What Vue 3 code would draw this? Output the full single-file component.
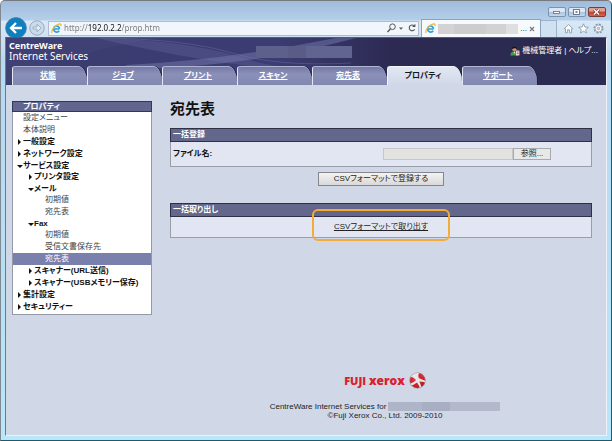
<script setup>
import { ref } from 'vue'

const url = ref('http://192.0.2.2/prop.htm')
const fileName = ref('')

const tabs = [
  { label: '状態' },
  { label: 'ジョブ' },
  { label: 'プリント' },
  { label: 'スキャン' },
  { label: '宛先表' },
  { label: 'プロパティ', active: true },
  { label: 'サポート' },
]

const menu = [
  { label: '設定メニュー' },
  { label: '本体説明' },
  { label: '一般設定', state: 'closed' },
  { label: 'ネットワーク設定', state: 'closed' },
  {
    label: 'サービス設定',
    state: 'open',
    children: [
      { label: 'プリンタ設定', state: 'closed' },
      { label: 'メール', state: 'open', children: [{ label: '初期値' }, { label: '宛先表' }] },
      {
        label: 'Fax',
        state: 'open',
        children: [{ label: '初期値' }, { label: '受信文書保存先' }, { label: '宛先表', current: true }],
      },
      { label: 'スキャナー(URL送信)', state: 'closed' },
      { label: 'スキャナー(USBメモリー保存)', state: 'closed' },
    ],
  },
  { label: '集計設定', state: 'closed' },
  { label: 'セキュリティー', state: 'closed' },
]
</script>

<template>
  <div class="window">
    <div class="titlebar">
      <button class="win-btn" type="button" aria-label="最小化">
        <svg viewBox="0 0 17 8" width="17" height="8"><rect x="5.5" y="3.5" width="6" height="2" fill="#fff" stroke="#5d6f86" stroke-width=".8" /></svg>
      </button>
      <button class="win-btn" type="button" aria-label="最大化">
        <svg viewBox="0 0 17 8" width="17" height="8"><rect x="5.5" y="1.5" width="6" height="5" fill="#fff" stroke="#5d6f86" stroke-width=".9" /><rect x="7.5" y="3.2" width="2" height="1.6" fill="#5d6f86" /></svg>
      </button>
      <button class="win-btn close" type="button" aria-label="閉じる">
        <svg viewBox="0 0 17 8" width="17" height="8"><path d="M6 1.5l5 5M11 1.5l-5 5" stroke="#6b2a22" stroke-width="2.8" /><path d="M6 1.5l5 5M11 1.5l-5 5" stroke="#fff" stroke-width="1.6" /></svg>
      </button>
    </div>

    <div class="toolbar">
      <button class="nav" type="button" aria-label="戻る">
        <svg viewBox="0 0 22 22" width="22" height="22"><circle cx="11" cy="11" r="10.4" fill="#0f7fbf" stroke="#3c7ba6" stroke-width=".8" /><path d="M17 11H6.5M11 6l-5 5 5 5" fill="none" stroke="#fff" stroke-width="2.3" /></svg>
      </button>
      <button class="nav" type="button" aria-label="進む">
        <svg viewBox="0 0 18 18" width="18" height="18"><circle cx="9" cy="9" r="7.2" fill="#c9dcee" stroke="#9aa9b9" stroke-width="1" /><path d="M5 8h4V5.2L13 9l-4 3.8V10H5z" fill="#e6f0f9" stroke="#93a2b3" stroke-width=".8" /></svg>
      </button>
      <div class="address">
        <svg class="ie" viewBox="0 0 12 12" width="11" height="11"><path d="M9.3 6.5H3.6M9.4 6.2A3.3 3.3 0 1 0 8.9 8.4" fill="none" stroke="#2b9fd9" stroke-width="1.8" /><path d="M1.2 10.8C-.4 9 4 2.6 8.4 1.2c2.3-.8 3 .2 2.3 2" fill="none" stroke="#f0b52e" stroke-width="1.3" /></svg>
        <input v-model="url" class="url" type="text" aria-label="アドレス" />
        <button class="plain" type="button" aria-label="検索">
          <svg viewBox="0 0 18 12" width="18" height="12"><circle cx="6.5" cy="4.7" r="2.8" fill="none" stroke="#555" stroke-width="1" /><path d="M4.5 6.8L1.5 10" stroke="#555" stroke-width="1.4" /><path d="M13 5.5h4l-2 2.3z" fill="#555" /></svg>
        </button>
        <button class="plain" type="button" aria-label="更新">
          <svg viewBox="0 0 10 12" width="10" height="12"><path d="M7.7 7.2A2.9 2.9 0 1 1 7 3.6" fill="none" stroke="#555" stroke-width="1.1" /><path d="M8.4 1.8v3.3H5.1z" fill="#555" /></svg>
        </button>
      </div>
      <div class="browser-tab">
        <svg class="ie" viewBox="0 0 12 12" width="11" height="11"><path d="M9.3 6.5H3.6M9.4 6.2A3.3 3.3 0 1 0 8.9 8.4" fill="none" stroke="#2b9fd9" stroke-width="1.8" /><path d="M1.2 10.8C-.4 9 4 2.6 8.4 1.2c2.3-.8 3 .2 2.3 2" fill="none" stroke="#f0b52e" stroke-width="1.3" /></svg>
        <span class="masked tab-mask"></span>
        <span class="dots">...</span>
        <button class="plain" type="button" aria-label="タブを閉じる">
          <svg viewBox="0 0 6 6" width="6" height="6"><path d="M1 1l4 4M5 1L1 5" stroke="#777" stroke-width="1.1" /></svg>
        </button>
      </div>
      <button class="new-tab" type="button" aria-label="新しいタブ"></button>
      <div class="tools">
        <button class="plain" type="button" aria-label="ホーム">
          <svg viewBox="0 0 12 12" width="11" height="11"><path d="M1.3 6.3L6 1.6l4.7 4.7H9.3v4.4H7.2V7.4H4.8v3.3H2.7V6.3z" fill="#fff" stroke="#8796a8" stroke-width=".9" /></svg>
        </button>
        <button class="plain" type="button" aria-label="お気に入り">
          <svg viewBox="0 0 12 12" width="11" height="11"><path d="M6 .9l1.5 3.5 3.8.3-2.9 2.5.9 3.7L6 8.9l-3.3 2 .9-3.7L.7 4.7l3.8-.3z" fill="#fff" stroke="#8796a8" stroke-width=".9" /></svg>
        </button>
        <button class="plain" type="button" aria-label="ツール">
          <svg viewBox="0 0 12 12" width="11" height="11"><circle cx="6" cy="6" r="4.5" fill="none" stroke="#8796a8" stroke-width="2" stroke-dasharray="2 1.53" /><circle cx="6" cy="6" r="3.7" fill="#fff" stroke="#8796a8" stroke-width=".8" /><circle cx="6" cy="6" r="1.4" fill="#c9dcee" stroke="#8796a8" stroke-width=".8" /></svg>
        </button>
      </div>
    </div>

    <div class="page">
      <header class="banner">
        <svg class="swoosh" viewBox="0 0 600 47" preserveAspectRatio="none">
          <path d="M0 0H150Q40 20 0 47z" fill="#5a5e94" opacity=".15" />
          <path d="M90 0Q190 2 250 24L300 34Q200 26 90 0z" fill="#6a6fa6" opacity=".3" />
          <path d="M120 27Q220 22 330 0H350Q240 30 120 31z" fill="#7a80b4" opacity=".45" />
          <path d="M95 0Q180 1 226 15T345 25" fill="none" stroke="#7177a8" stroke-width="1" opacity=".4" />
        </svg>
        <div class="banner-top">
          <div class="product">
            <strong>CentreWare</strong>
            <span>Internet Services</span>
          </div>
          <span class="host-mask"></span>
          <div class="user">
            <svg viewBox="0 0 10 10" width="10" height="10"><circle cx="4.4" cy="3" r="2.3" fill="#d09468" /><path d="M2 3Q1.6.5 4.4.4T7 3Q5 1.6 2 3z" fill="#17130f" /><path d="M.4 9.6Q.5 5.8 4 5.6T8 9.6z" fill="#3fa04b" /><path d="M3.7 5.7l.8 2 .8-2z" fill="#fff" /><rect x="6" y="4.6" width="3.4" height="4.8" fill="#f3eee8" /><path d="M6.7 6h2M6.7 7.7h2" stroke="#c24238" stroke-width=".9" /></svg>
            <a href="#">機械管理者</a><span>|</span><a href="#">ヘルプ...</a>
          </div>
        </div>
        <nav class="tabs" aria-label="メイン">
          <a v-for="tab in tabs" :key="tab.label" href="#" :class="['tab', { active: tab.active }]">{{ tab.label }}</a>
        </nav>
      </header>

      <div class="body">
        <aside class="side">
          <h2>プロパティ</h2>
          <ul class="tree">
            <li v-for="a in menu" :key="a.label">
              <a href="#" :class="['row', a.state]"><i></i>{{ a.label }}</a>
              <ul v-if="a.children" class="level2">
                <li v-for="b in a.children" :key="b.label">
                  <a href="#" :class="['row', b.state]"><i></i>{{ b.label }}</a>
                  <ul v-if="b.children" class="level3">
                    <li v-for="c in b.children" :key="c.label">
                      <a href="#" :class="['row', { current: c.current }]">{{ c.label }}</a>
                    </li>
                  </ul>
                </li>
              </ul>
            </li>
          </ul>
        </aside>

        <main class="main">
          <h1>宛先表</h1>
          <form @submit.prevent>
            <section class="panel">
              <h3>一括登録</h3>
              <div class="panel-body file-row">
                <label for="csv">ファイル名:</label>
                <div class="file">
                  <input id="csv" v-model="fileName" type="text" readonly />
                  <button type="button">参照...</button>
                </div>
              </div>
            </section>
            <button class="submit" type="submit">CSVフォーマットで登録する</button>
          </form>
          <section class="panel">
            <h3>一括取り出し</h3>
            <div class="panel-body export">
              <a class="export-link" href="#">CSVフォーマットで取り出す</a>
            </div>
          </section>

          <footer>
            <div class="logo">
              <span>FUJI <b>xerox</b></span>
              <svg viewBox="0 0 18 18" width="17" height="17">
                <defs>
                  <radialGradient id="ball" cx=".4" cy=".4" r=".65"><stop offset="0" stop-color="#ee3b3b" /><stop offset="1" stop-color="#b3141c" /></radialGradient>
                  <clipPath id="ballclip"><circle cx="9" cy="9" r="8.3" /></clipPath>
                </defs>
                <circle cx="9" cy="9" r="8.3" fill="url(#ball)" />
                <g clip-path="url(#ballclip)">
                  <path d="M1 5Q3 .5 8 0L11 1Q9 3 10.500 6.500L18 9.500V11.500Q14 10 11 10L14 18H11.500Q11 14 8.500 11Q5 13.500 2 14.500L1 12.500Q5.500 11 7.500 8.500Q4.500 5 1 5z" fill="#e4e7ed" />
                  <path d="M8 0Q15 0 18 7.500L11.300 6Q10 3.500 12.500 1.500z" fill="#d8262f" />
                </g>
                <circle cx="9" cy="9" r="8.3" fill="none" stroke="#a9a4b2" stroke-width=".6" />
              </svg>
            </div>
            <p class="credit">CentreWare Internet Services for <span class="model-mask"></span></p>
            <p class="credit">©Fuji Xerox Co., Ltd. 2009-2010</p>
          </footer>
        </main>
      </div>
    </div>
  </div>
</template>

<style>
body {
  background: #fff;
}
</style>

<style scoped>
* {
  box-sizing: border-box;
}
h1, h2, h3, p, ul {
  margin: 0;
  padding: 0;
}
ul {
  list-style: none;
}
svg {
  display: block;
}
a {
  color: inherit;
  text-decoration: none;
}
button, input {
  font: inherit;
  color: inherit;
  margin: 0;
  padding: 0;
  border: 0;
  background: none;
  border-radius: 0;
}
.window {
  display: flex;
  flex-direction: column;
  min-height: 100vh;
  padding: 0 4px 4px;
  border: 1px solid #1d5c6c;
  border-top-color: #77777c;
  border-left-color: #808891;
  border-radius: 5px 5px 0 0;
  background: linear-gradient(180deg, #9fbcdb 0, #b4cfe9 19px, #d9e8f5 20px, #cfe2f2 37px, #b5d9f1 60px, #b9e6f8 100%);
  font: 8px/12px "Liberation Sans", "Noto Sans CJK JP", sans-serif;
  font-feature-settings: "palt";
  color: #222;
}
.titlebar {
  display: flex;
  justify-content: flex-end;
  gap: 2px;
  height: 18px;
  padding-top: 6px;
  padding-right: 1px;
}
.win-btn {
  width: 18px;
  height: 10px;
  border: 1px solid #7c93ac;
  border-radius: 2px;
  background: linear-gradient(#dbe8f4 45%, #a9c2dc 50%, #c7d9ea);
  overflow: hidden;
}
.win-btn svg {
  margin-left: -1px;
}
.win-btn.close {
  border-color: #7a3c37;
  background: linear-gradient(#e2a090 40%, #c5402c 50%, #d4664d);
}
.toolbar {
  display: flex;
  align-items: center;
  height: 18px;
}
.nav {
  flex: none;
}
.nav + .nav {
  margin-left: 1px;
}
.address {
  display: flex;
  align-items: center;
  flex: 1;
  height: 15px;
  margin: 0 2px 0 2px;
  padding-left: 2px;
  border: 1px solid #aebccb;
  background: #f0f6fb;
}
.ie {
  flex: none;
}
.url {
  flex: 1;
  min-width: 0;
  margin-left: 2px;
  font-family: "Noto Sans", sans-serif;
  background: linear-gradient(90deg, #777 0, #777 24px, #111 24px, #111 57px, #777 57px);
  -webkit-background-clip: text;
  background-clip: text;
  color: transparent;
}
.address .plain + .plain {
  margin-left: 3px;
  margin-right: 1px;
}
.browser-tab {
  display: flex;
  align-items: center;
  gap: 2px;
  height: 18px;
  width: 120px;
  padding: 0 5px 0 3px;
  border: 1px solid #8fa3b8;
  border-bottom: 0;
  background: #f6fafd;
}
.masked {
  background: linear-gradient(90deg, #d3d3d3 0 20%, #cdcdcd 20% 60%, #d2d2d2 60% 85%, #dfdfdf 85%);
}
.tab-mask {
  width: 81px;
  height: 10px;
}
.dots {
  flex: 1;
}
.new-tab {
  width: 16px;
  height: 17px;
  border: 1px solid #9db2c8;
  border-left: 0;
  border-bottom: 0;
  background: #cfe1f3;
}
.tools {
  display: flex;
  gap: 4px;
  padding: 0 3px 0 6px;
}
.page {
  display: flex;
  flex-direction: column;
  flex: 1;
  border: 1px solid #eef2f8;
  border-left-color: #77787f;
  border-top-color: #55597a;
  background: #d0d8e8;
}
.banner {
  position: relative;
  background: linear-gradient(90deg, #3b3c70 0, #3b3c72 45%, #2c2a52 65%, #2b2a50);
}
.swoosh {
  position: absolute;
  inset: 0;
  width: 100%;
  height: 100%;
}
.banner-top {
  position: relative;
  display: grid;
  grid-template-columns: 1fr 96px 1fr;
  height: 28px;
  padding: 0 8px 0 3px;
  color: #fff;
}
.product {
  display: flex;
  flex-direction: column;
  padding-top: 3px;
  font: 10px/11px "Noto Sans", sans-serif;
}
.product strong {
  font-size: 9px;
  line-height: 10px;
}
.host-mask {
  height: 12px;
  margin-top: 8px;
  background: linear-gradient(90deg, #5e608c 0 33%, #5a5c88 33% 52%, #616390 52%);
}
.user {
  display: flex;
  justify-content: flex-end;
  align-items: center;
  gap: 2px;
  height: 12px;
  margin-top: 7px;
}
.tabs {
  position: relative;
  display: flex;
  padding-left: 6px;
}
.tab {
  width: 75px;
  height: 19px;
  padding-right: 4px;
  border-left: 1px solid #e5e7f3;
  border-top: 1px solid #b2b6d3;
  border-radius: 3px 9px 0 0 / 3px 16px 0 0;
  background: linear-gradient(#747aa5, #8b90b9 40%, #8187b0);
  box-shadow: 1px 0 0 #23223f;
  color: #fff;
  font-weight: bold;
  line-height: 18px;
  text-align: center;
  text-decoration: underline;
}
.tab.active {
  border-color: #f3f5fb;
  background: linear-gradient(#e2e7f3, #d0d8e8);
  color: #16161c;
  text-decoration: none;
}
.body {
  display: flex;
  flex: 1;
  align-items: flex-start;
  padding: 16px 14px 0 6px;
  gap: 18px;
}
.side {
  flex: none;
  width: 140px;
  border: 1px solid #9499a6;
  border-top: 0;
  background: #fff;
}
.side h2 {
  height: 11px;
  margin: 0 -1px;
  padding-left: 10px;
  border: 1px solid #343757;
  background: #62668f;
  color: #fff;
  font-size: 8px;
  line-height: 9px;
}
.tree {
  padding-bottom: 1px;
}
.tree ul {
  margin-top: -1px;
}
.row {
  display: flex;
  align-items: center;
  height: 12px;
  padding-left: 5px;
  color: #444;
}
.row i {
  width: 5px;
}
.row.open, .row.closed {
  color: #111;
  font-weight: bold;
}
.row.closed i {
  width: 0;
  margin-right: 2px;
  border: 3px solid transparent;
  border-left: 3px solid #111;
  border-right: 0;
}
.row.open i {
  width: 0;
  margin-left: -1px;
  margin-right: 0;
  border: 3px solid transparent;
  border-top: 3px solid #111;
  border-bottom: 0;
}
.level2 .row {
  padding-left: 16px;
}
.level3 .row {
  padding-left: 32px;
}
.row.current {
  background: #7a80ac;
  color: #fff;
}
.main {
  display: flex;
  flex-direction: column;
  flex: 1;
  align-self: stretch;
  min-width: 0;
}
h1 {
  height: 27px;
  font-size: 15px;
  line-height: 16px;
  color: #111;
}
.panel {
  border: 1px solid #9a9ea8;
  border-top: 0;
  background: #e2e6f2;
}
.panel h3 {
  height: 14px;
  margin: 0 -1px;
  padding-left: 2px;
  border: 1px solid #2f3045;
  background: #63678b;
  color: #fff;
  font-size: 8px;
  line-height: 12px;
}
.panel-body {
  height: 24px;
  padding: 0 2px;
}
.file-row {
  display: flex;
  align-items: center;
}
.file-row label {
  flex: 1;
  font-weight: bold;
  color: #111;
}
.file {
  display: flex;
  height: 12px;
  margin-right: 38px;
}
.file input {
  width: 130px;
  border: 1px solid #c6c7c9;
  background: #e3e3e2;
}
.file button {
  width: 38px;
  border: 1px solid #a9aaae;
  background: #e8e8e9;
  line-height: 10px;
}
.submit {
  display: block;
  width: 126px;
  height: 14px;
  margin: 5px auto 17px;
  border: 1px solid #85868b;
  background: linear-gradient(#f3f3f3, #d9d9da);
  line-height: 12px;
}
.export {
  display: flex;
  justify-content: center;
  height: 20px;
}
.export-link {
  position: relative;
  line-height: 19px;
  text-decoration: underline;
}
.export-link::after {
  content: "";
  position: absolute;
  inset: -8px -22px -4px;
  border: 2px solid #f4ac38;
  border-radius: 6px;
}
footer {
  margin-top: auto;
  padding: 0 0 15px 8px;
  text-align: center;
}
.logo {
  display: flex;
  justify-content: center;
  align-items: center;
  gap: 4px;
  margin-bottom: 13px;
  color: #d9202e;
  font: 800 11px/16px "Open Sans", sans-serif;
}
.logo b {
  font-size: 12px;
  font-weight: 800;
}
.credit {
  display: flex;
  justify-content: center;
  gap: 2px;
  line-height: 9px;
}
.model-mask {
  width: 112px;
  height: 9px;
  background: linear-gradient(90deg, #afb5c8 0 30%, #a9afc2 30% 55%, #b3b9cb 55%);
}
</style>
